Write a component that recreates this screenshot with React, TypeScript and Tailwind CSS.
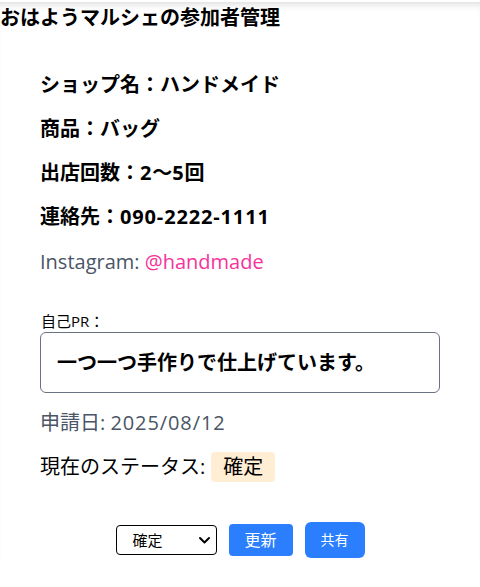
import React from "react";

const font = { fontFamily: "'Open Sans','Noto Sans CJK JP',sans-serif" };

export default function App() {
  return (
    <div className="w-[480px] h-[587px] bg-white overflow-hidden text-black" style={font}>
      <div className="mt-[2px] shadow-[inset_0_7px_8px_-6px_rgba(0,0,0,0.18)]">
        <h1 className="text-[20px] leading-[28px] font-bold pt-[2px] pl-0">おはようマルシェの参加者管理</h1>
        <div className="pl-[40px] pr-[40px]">
          <div className="mt-[39px] flex flex-col gap-[16px] text-[20px] leading-[28px] font-bold">
            <p>ショップ名：ハンドメイド</p>
            <p>商品：バッグ</p>
            <p>
              出店回数：<span className="tracking-[0.8px]">2</span>～<span className="tracking-[0.8px]">5</span>回
            </p>
            <p>
              連絡先：<span className="tracking-[0.85px]">090-2222-1111</span>
            </p>
          </div>
          <p className="mt-[17px] text-[20px] leading-[28px] text-gray-600">
            Instagram: <span className="text-pink-500">@handmade</span>
          </p>
          <div className="mt-[35px]">
            <p className="text-[15px] leading-[20px] pl-[1px]">自己PR：</p>
            <div className="mt-[1px] h-[61px] w-[400px] border border-gray-500 rounded-[6px] flex items-center pl-[16px] text-[20px] font-bold leading-[28px]">
              一つ一つ手作りで仕上げています。
            </div>
          </div>
          <p className="mt-[16px] text-[20px] leading-[28px] text-gray-600">
            申請日: <span className="tracking-[0.9px]">2025/08/12</span>
          </p>
          <div className="mt-[15px] flex items-center gap-[6px] text-[20px]">
            <span className="leading-[28px]">現在のステータス:</span>
            <span className="bg-orange-100 rounded-[4px] px-[12px] h-[30px] leading-[30px]">確定</span>
          </div>
        </div>
        <div className="mt-[40px] flex justify-center items-center gap-[12px]">
          <div className="relative w-[101px] h-[30px] border border-black rounded-[4px] flex items-center">
            <span className="pl-[16px] text-[15px] leading-[20px]">確定</span>
            <svg className="absolute right-[5px] top-[9px]" width="13" height="10" viewBox="0 0 13 10" fill="none">
              <path d="M2 3 L6.5 7.5 L11 3" stroke="#000" strokeWidth="2" strokeLinecap="round" strokeLinejoin="round" />
            </svg>
          </div>
          <button className="w-[64px] h-[32px] bg-blue-500 text-white text-[16px] rounded-[4px] leading-[20px]">更新</button>
          <button className="w-[60px] h-[36px] bg-blue-500 text-white text-[14px] rounded-[6px] leading-[20px]">共有</button>
        </div>
      </div>
    </div>
  );
}
